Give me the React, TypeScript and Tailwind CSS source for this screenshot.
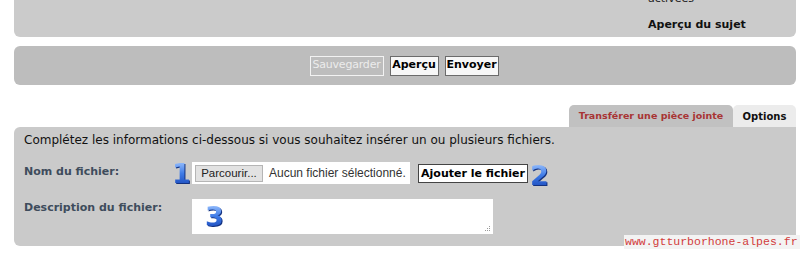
import React from "react";

function Numeral({ n }: { n: string }) {
  return (
    <span className="inline-block font-['DejaVu_Sans',sans-serif] font-bold text-[27px] leading-none bg-gradient-to-b from-[#a4c8ff] via-[#3e7ae6] to-[#1b47b8] bg-clip-text text-transparent drop-shadow-[1.5px_1.5px_0_#13317f]">
      {n}
    </span>
  );
}

function Grip() {
  return (
    <svg className="absolute right-[2px] bottom-[2px]" width="7" height="7" viewBox="0 0 7 7">
      <rect x="5" y="1" width="1" height="1" fill="#9a9a9a" />
      <rect x="3" y="3" width="1" height="1" fill="#9a9a9a" />
      <rect x="5" y="3" width="1" height="1" fill="#9a9a9a" />
      <rect x="1" y="5" width="1" height="1" fill="#9a9a9a" />
      <rect x="3" y="5" width="1" height="1" fill="#9a9a9a" />
      <rect x="5" y="5" width="1" height="1" fill="#9a9a9a" />
    </svg>
  );
}

export default function App() {
  return (
    <div className="relative w-[800px] h-[255px] overflow-hidden bg-white font-['DejaVu_Sans',Verdana,sans-serif] text-black">
      {/* top panel, only its bottom part is visible */}
      <div className="ml-[14px] w-[782px] h-[37px] bg-[#cbcbcb] rounded-b-[6px] flex justify-end overflow-hidden">
        <div className="w-[148px] -mt-[8px] text-[11px] leading-[14px]">
          <div className="text-[#222]">activées</div>
          <div className="mt-[12px] font-bold text-[#111]">Aperçu du sujet</div>
        </div>
      </div>

      {/* action bar */}
      <div className="ml-[14px] mt-[9px] w-[782px] h-[39px] bg-[#bdbdbd] rounded-[6px] flex items-center justify-center gap-[6px] pr-[2px]">
        <button className="h-[20px] w-[74px] border border-[#f2f2f2] text-[#ececec] text-[11px] font-normal tracking-[-0.2px] bg-transparent">
          Sauvegarder
        </button>
        <button className="h-[20px] w-[49px] border border-[#6b6b6b] bg-[#f7f7f7] text-[11px] font-bold">
          Aperçu
        </button>
        <button className="h-[20px] w-[54px] border border-[#6b6b6b] bg-[#f7f7f7] text-[11px] font-bold">
          Envoyer
        </button>
      </div>

      {/* tabs */}
      <div className="mt-[20px] w-[796px] flex justify-end">
        <div className="w-[164px] h-[22px] bg-[#c1c1c1] rounded-t-[5px] flex items-center justify-center pt-[1px] text-[9.5px] font-bold text-[#a83434]">
          Transférer une pièce jointe
        </div>
        <div className="w-[63px] h-[22px] bg-[#ececec] rounded-t-[5px] flex items-center justify-center pt-[1px] text-[10px] font-bold text-[#111]">
          Options
        </div>
      </div>

      {/* attachment panel */}
      <div className="ml-[14px] w-[782px] h-[119px] bg-[#cacaca] rounded-b-[6px] rounded-tl-[6px] pl-[10px] pt-[5px]">
        <div className="text-[12px] leading-[16px] text-[#111]">
          Complétez les informations ci-dessous si vous souhaitez insérer un ou plusieurs fichiers.
        </div>

        <div className="mt-[16px] flex items-start">
          <div className="w-[148px] text-[11px] font-bold text-[#3e4c5c]">Nom du fichier:</div>
          <div className="w-[20px] -mt-[4px]">
            <Numeral n="1" />
          </div>
          <div className="w-[218px] h-[22px] -mt-[2px] bg-white flex items-center pl-[3px] gap-[6px] font-['Liberation_Sans',Arial,sans-serif]">
            <span className="h-[17px] w-[68px] bg-[#e2e2e2] border border-[#b5b5b5] text-[11.5px] leading-[15px] text-center text-[#222]">
              Parcourir...
            </span>
            <span className="text-[12px] text-[#333] whitespace-nowrap">Aucun fichier sélectionné.</span>
          </div>
          <button className="ml-[8px] h-[19px] w-[110px] border border-[#444] bg-white text-[11px] font-bold leading-[17px]">
            Ajouter le fichier
          </button>
          <div className="ml-[2px] -mt-[2px]">
            <Numeral n="2" />
          </div>
        </div>

        <div className="mt-[7px] flex items-start">
          <div className="w-[168px] pt-[1px] text-[11px] font-bold text-[#3e4c5c]">Description du fichier:</div>
          <div className="relative w-[301px] h-[35px] bg-white pl-[13px] pt-[4px]">
            <Numeral n="3" />
            <Grip />
          </div>
        </div>
      </div>

      {/* watermark */}
      <div className="absolute left-[624px] top-[235px] w-[176px] h-[14px] bg-[#f3f3f3] font-['Liberation_Mono',monospace] text-[11.5px] leading-[14px] text-[#d23c3c] pl-[1px]">
        www.gtturborhone-alpes.fr
      </div>
    </div>
  );
}
